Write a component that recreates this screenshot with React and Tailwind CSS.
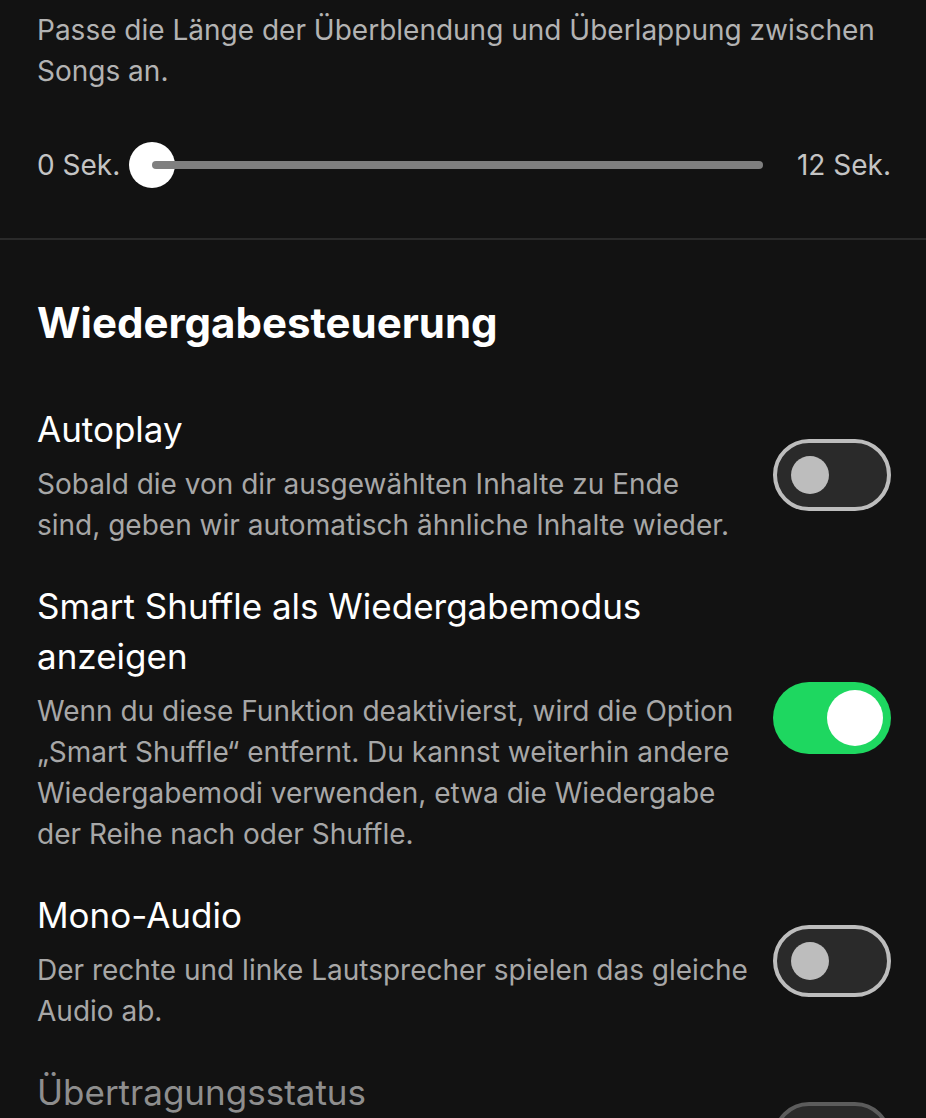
import React from "react";

const font = { fontFamily: "Inter, 'Noto Sans', sans-serif" };

function Toggle({ on, dim }) {
  if (on) {
    return (
      <div className="flex-shrink-0 w-[118px] h-[72px] rounded-full bg-[#1ed760] flex items-center justify-end pr-[8px]">
        <div className="w-[56px] h-[56px] rounded-full bg-white" />
      </div>
    );
  }
  return (
    <div
      className={
        "flex-shrink-0 w-[118px] h-[72px] rounded-full border-[4px] bg-[#2a2a2a] flex items-center pl-[14px] " +
        (dim ? "border-[#5c5c5c]" : "border-[#bdbdbd]")
      }
    >
      <div className={"w-[38px] h-[38px] rounded-full " + (dim ? "bg-[#5c5c5c]" : "bg-[#bdbdbd]")} />
    </div>
  );
}

function SettingRow({ title, children, on, dim }) {
  return (
    <div className="flex items-center gap-[18px]">
      <div className="flex-1 flex flex-col gap-[10px]">
        <div className={"text-[35px] leading-[50px] " + (dim ? "text-[#8e8e8e]" : "text-white")}>{title}</div>
        <div className="text-[28px] leading-[41px] text-[#a7a7a7]">{children}</div>
      </div>
      <Toggle on={on} dim={dim} />
    </div>
  );
}

export default function App() {
  return (
    <div className="w-[926px] h-[1118px] overflow-hidden bg-[#121212]" style={font}>
      <div className="pl-[37px] pr-[35px] pt-[10px]">
        <p className="text-[28px] leading-[41px] text-[#b3b3b3]">
          Passe die Länge der Überblendung und Überlappung zwischen Songs an.
        </p>
        <div className="flex items-center h-[48px] mt-[49px] text-[28px] text-[#c4c4c4]">
          <span>0 Sek.</span>
          <div className="flex-1 flex items-center ml-[9px] mr-[34px]">
            <div className="w-[46px] h-[46px] rounded-full bg-white flex-shrink-0" />
            <div className="flex-1 h-[8px] rounded-full bg-[#7f7f7f] -ml-[23px]" />
          </div>
          <span>12 Sek.</span>
        </div>
      </div>
      <div className="h-[2px] bg-[#2a2a2a] mt-[49px]" />
      <div className="pl-[37px] pr-[35px]">
        <h2 className="text-[42px] leading-[56px] font-bold text-white mt-[55px]">Wiedergabesteuerung</h2>
        <div className="flex flex-col gap-[35px] mt-[53px]">
          <SettingRow title="Autoplay" on={false}>
            Sobald die von dir ausgewählten Inhalte zu Ende
            <br />
            sind, geben wir automatisch ähnliche Inhalte wieder.
          </SettingRow>
          <SettingRow title="Smart Shuffle als Wiedergabemodus anzeigen" on>
            Wenn du diese Funktion deaktivierst, wird die Option „Smart Shuffle“ entfernt. Du kannst weiterhin andere
            Wiedergabemodi verwenden, etwa die Wiedergabe der Reihe nach oder Shuffle.
          </SettingRow>
          <SettingRow title="Mono-Audio" on={false}>
            Der rechte und linke Lautsprecher spielen das gleiche Audio ab.
          </SettingRow>
          <SettingRow title="Übertragungsstatus" on={false} dim>
            Zeige deinen Freunden, was du gerade hörst, und sieh dir ihre Aktivität an.
          </SettingRow>
        </div>
      </div>
    </div>
  );
}
